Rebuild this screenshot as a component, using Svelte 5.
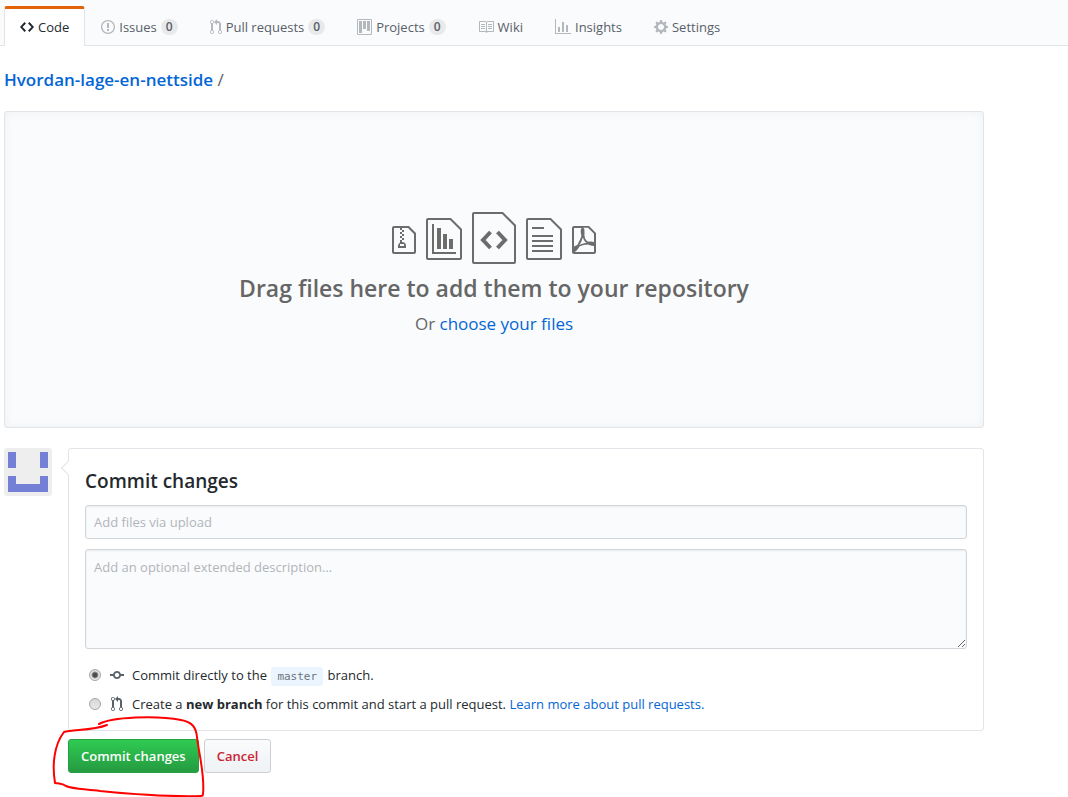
<script>
  const icons = {
    code: { w: 14, d: 'M9.5 3L8 4.5 11.5 8 8 11.5 9.5 13 14 8 9.5 3zm-5 0L0 8l4.5 5L6 11.5 2.5 8 6 4.5 4.5 3z' },
    issue: { w: 14, d: 'M7 2.3c3.14 0 5.7 2.56 5.7 5.7s-2.56 5.7-5.7 5.7A5.71 5.71 0 0 1 1.3 8c0-3.14 2.56-5.7 5.7-5.7zM7 1C3.14 1 0 4.14 0 8s3.14 7 7 7 7-3.14 7-7-3.14-7-7-7zm1 3H6v5h2V4zm0 6H6v2h2v-2z' },
    pull: { w: 12, d: 'M11 11.28V5c-.03-.78-.34-1.47-.94-2.06C9.46 2.35 8.78 2.03 8 2H7V0L4 3l3 3V4h1c.27.02.48.11.69.31.21.2.3.42.31.69v6.28A1.993 1.993 0 0 0 10 15a1.993 1.993 0 0 0 1-3.72zm-1 2.92c-.66 0-1.2-.55-1.2-1.2 0-.65.55-1.2 1.2-1.2.65 0 1.2.55 1.2 1.2 0 .65-.55 1.2-1.2 1.2zM4 3c0-1.11-.89-2-2-2a1.993 1.993 0 0 0-1 3.72v6.56A1.993 1.993 0 0 0 2 15a1.993 1.993 0 0 0 1-3.72V4.72c.59-.34 1-.98 1-1.72zm-.8 10c0 .66-.55 1.2-1.2 1.2-.65 0-1.2-.55-1.2-1.2 0-.65.55-1.2 1.2-1.2.65 0 1.2.55 1.2 1.2zM2 4.2C1.34 4.2.8 3.65.8 3c0-.65.55-1.2 1.2-1.2.65 0 1.2.55 1.2 1.2 0 .65-.55 1.2-1.2 1.2z' },
    project: { w: 15, d: 'M10 12h3V2h-3v10zm-4-2h3V2H6v8zm-4 4h3V2H2v12zm-1 1h13V1H1v14zM14 0H1a1 1 0 0 0-1 1v14a1 1 0 0 0 1 1h13a1 1 0 0 0 1-1V1a1 1 0 0 0-1-1z' },
    book: { w: 16, d: 'M3 5h4v1H3V5zm0 3h4V7H3v1zm0 2h4V9H3v1zm11-5h-4v1h4V5zm0 2h-4v1h4V7zm0 2h-4v1h4V9zm2-6v9c0 .55-.45 1-1 1H9.5l-1 1-1-1H2c-.55 0-1-.45-1-1V3c0-.55.45-1 1-1h5.5l1 1 1-1H15c.55 0 1 .45 1 1zm-8 .5L7.5 3H2v9h6V3.5zm7-.5H9.5l-.5.5V12h6V3z' },
    graph: { w: 16, d: 'M16 14v1H0V0h1v14h15zM5 13H3V8h2v5zm4 0H7V3h2v10zm4 0h-2V6h2v7z' },
    gear: { w: 14, d: 'M14 8.77v-1.6l-1.94-.64-.45-1.09.88-1.84-1.13-1.13-1.81.91-1.09-.45-.69-1.92h-1.6l-.63 1.94-1.11.45-1.84-.88-1.13 1.13.91 1.81-.45 1.09L0 7.23v1.59l1.94.64.45 1.09-.88 1.84 1.13 1.13 1.81-.91 1.09.45.69 1.92h1.59l.63-1.94 1.11-.45 1.84.88 1.13-1.13-.92-1.81.47-1.09L14 8.75v.02zM7 11c-1.66 0-3-1.34-3-3s1.34-3 3-3 3 1.34 3 3-1.34 3-3 3z' },
    commit: { w: 14, d: 'M10.86 7c-.45-1.72-2-3-3.86-3-1.86 0-3.41 1.28-3.86 3H0v2h3.14c.45 1.72 2 3 3.86 3 1.86 0 3.41-1.28 3.86-3H14V7h-3.14zM7 10.2c-1.22 0-2.2-.98-2.2-2.2 0-1.22.98-2.2 2.2-2.2 1.22 0 2.2.98 2.2 2.2 0 1.22-.98 2.2-2.2 2.2z' }
  };

  const tabs = [
    { label: 'Code', icon: 'code', active: true },
    { label: 'Issues', icon: 'issue', count: 0 },
    { label: 'Pull requests', icon: 'pull', count: 0 },
    { label: 'Projects', icon: 'project', count: 0 },
    { label: 'Wiki', icon: 'book' },
    { label: 'Insights', icon: 'graph' },
    { label: 'Settings', icon: 'gear' }
  ];

  let target = $state('direct');
  let summary = $state('');
  let description = $state('');
</script>

{#snippet icon(name)}
  <svg class="icon" width={icons[name].w} height="16" viewBox="0 0 {icons[name].w} 16" aria-hidden="true"><path fill-rule="evenodd" d={icons[name].d} /></svg>
{/snippet}

<nav class="tabs">
  {#each tabs as tab}
    <a href="#{tab.icon}" class="tab" class:active={tab.active}>
      {@render icon(tab.icon)}
      <span>{tab.label}</span>
      {#if tab.count !== undefined}<span class="counter">{tab.count}</span>{/if}
    </a>
  {/each}
</nav>

<main>
  <div class="breadcrumb"><a href="#repo">Hvordan-lage-en-nettside</a> <span>/</span></div>

  <section class="dropzone">
    <div class="files" aria-hidden="true">
      <svg width="24" height="32" viewBox="0 0 12 16"><path fill="currentColor" fill-rule="evenodd" d="M8.5 1H1a1 1 0 0 0-1 1v12a1 1 0 0 0 1 1h10a1 1 0 0 0 1-1V4.5L8.5 1zM11 14H1V2h3v1h1V2h3l3 3v9zM5 4V3h1v1H5zM4 4h1v1H4V4zm1 2V5h1v1H5zM4 6h1v1H4V6zm1 2V7h1v1H5zM4 9.28A2 2 0 0 0 3 11v1h4v-1a2 2 0 0 0-2-2V8H4v1.28zM6 10v1H4v-1h2z" /></svg>
      <svg width="36" height="44" viewBox="0 0 36 44">
        <path class="line" d="M2 1H24.500L35 11.500V40a1 1 0 0 1-1 1H2a1 1 0 0 1-1-1V2a1 1 0 0 1 1-1z" />
        <path class="line" d="M7 6V35H30" />
        <path fill="currentColor" d="M11 10h4v21h-4zM17 16h4v15h-4zM23 21h4v10h-4z" />
      </svg>
      <svg width="44" height="56" viewBox="0 0 44 56">
        <path class="line" d="M2 1H30.500L43 13.500V50a1 1 0 0 1-1 1H2a1 1 0 0 1-1-1V2a1 1 0 0 1 1-1z" />
        <path class="chevrons" d="M18.500 20L11 28l7.500 8M25.500 20L33 28l-7.500 8" />
      </svg>
      <svg width="36" height="44" viewBox="0 0 36 44">
        <path class="line" d="M2 1H24.500L35 11.500V40a1 1 0 0 1-1 1H2a1 1 0 0 1-1-1V2a1 1 0 0 1 1-1z" />
        <path class="line" d="M6 10h12M6 18h21M6 23h21M6 28h21M6 33h21" />
      </svg>
      <svg width="24" height="32" viewBox="0 0 12 16"><path fill="currentColor" fill-rule="evenodd" d="M8.5 1H1a1 1 0 0 0-1 1v12a1 1 0 0 0 1 1h10a1 1 0 0 0 1-1V4.500L8.500 1zM1 2h4a.68.68 0 0 0-.31.2 1.080 1.080 0 0 0-.23.47 4.220 4.220 0 0 0-.09 1.470c.06.609.173 1.211.34 1.800A21.780 21.780 0 0 1 3.600 8.600c-.5 1-.8 1.660-.91 1.840a7.156 7.156 0 0 0-.69.3 4.190 4.190 0 0 0-1 .64V2zm4.420 4.800a5.650 5.650 0 0 0 1.170 2.090c.275.237.595.417.94.53-.64.09-1.230.2-1.810.33-.618.15-1.223.347-1.810.59s.22-.44.61-1.250c.365-.74.67-1.510.91-2.300l-.01.01zM11 14H1.500a.743.743 0 0 1-.17 0 2.120 2.120 0 0 0 .73-.44 10.140 10.140 0 0 0 1.780-2.380c.31-.13.58-.23.81-.31l.42-.14c.45-.13.94-.23 1.440-.33s1-.16 1.480-.2a8.650 8.650 0 0 0 1.390.53c.403.11.814.188 1.230.23h.38V14H11zm0-4.860a3.740 3.740 0 0 0-.64-.28 4.220 4.220 0 0 0-.75-.11c-.411.003-.822.03-1.230.08a3 3 0 0 1-1.840-1.640 6.070 6.070 0 0 1-.32-1.840c.06-.62.06-1.250 0-1.870.04-.66-.09-1.250-.3-1.400a.66.66 0 0 0-.49-.22H8l3 3v4.280z" /></svg>
    </div>
    <h1>Drag files here to add them to your repository</h1>
    <p>Or <a href="#choose">choose your files</a></p>
  </section>

  <form class="commit" onsubmit={(e) => e.preventDefault()}>
    <svg class="avatar" width="48" height="48" viewBox="0 0 48 48" role="img" aria-label="Avatar">
      <rect width="48" height="48" rx="3" fill="#eeeeee" />
      <path fill="#7380d6" d="M4 4h8v16H4zM36 4h8v16h-8zM4 28h8v8h24v-8h8v16H4z" />
    </svg>
    <div class="body">
      <div class="box">
        <h2>Commit changes</h2>
        <input class="field" type="text" aria-label="Commit summary" placeholder="Add files via upload" bind:value={summary} />
        <textarea class="field" aria-label="Extended description" placeholder="Add an optional extended description…" bind:value={description}></textarea>
        <label class="choice">
          <input type="radio" name="target" value="direct" bind:group={target} />
          <span class="choice-icon">{@render icon('commit')}</span>
          <span>Commit directly to the <code>master</code> branch.</span>
        </label>
        <div class="choice">
          <input id="new-branch" type="radio" name="target" value="branch" bind:group={target} />
          <span class="choice-icon">{@render icon('pull')}</span>
          <span><label for="new-branch">Create a <strong>new branch</strong> for this commit and start a pull request.</label> <a href="#learn">Learn more about pull requests.</a></span>
        </div>
      </div>
      <div class="actions">
        <button class="btn primary" type="submit">Commit changes</button>
        <button class="btn danger" type="button">Cancel</button>
        <svg class="scribble" width="160" height="90" viewBox="50 710 160 90" aria-hidden="true">
          <path d="M99 724C112 717 156 715 181 720C192 722 196 727 197 737C199 755 205 775 203 794Q203 796 201 796C165 797 130 794 100 791C84 789 72 789 66 786C62 783 60 784 55 783C52 765 54 745 64 732C72 729 92 731 107 725" />
        </svg>
      </div>
    </div>
  </form>
</main>

<style>
  :global(body) {
    margin: 0;
    background: #fff;
    color: #24292e;
    font: 13px/20px "Open Sans", "Noto Sans", sans-serif;
  }
  a { color: #0366d6; text-decoration: none; }
  .icon { display: block; fill: currentColor; flex: none; }

  .tabs {
    display: flex;
    padding: 6px 4px 0;
    background: #fafbfc;
    border-bottom: 1px solid #e1e4e8;
  }
  .tab {
    display: flex;
    align-items: center;
    gap: 4px;
    height: 36px;
    margin-bottom: -1px;
    padding: 0 15px 1px;
    border: 1px solid transparent;
    border-top-width: 3px;
    border-bottom: 0;
    border-radius: 3px 3px 0 0;
    color: #586069;
    white-space: nowrap;
  }
  .tab .icon { color: #b4b8bc; }
  .tab.active {
    background: #fff;
    border-color: #e36209 #e1e4e8 transparent;
    color: #24292e;
  }
  .tab.active .icon { color: #24292e; }
  .counter {
    padding: 2px 5px;
    border-radius: 20px;
    background: rgba(27, 31, 35, 0.08);
    font-size: 12px;
    font-weight: 600;
    line-height: 12px;
  }

  main { max-width: 980px; padding: 0 4px; }

  .breadcrumb {
    padding: 20px 0 18px;
    color: #586069;
    font-size: 17px;
    line-height: 27px;
  }
  .breadcrumb a { font-weight: 600; }

  .dropzone {
    padding: 100px 20px 89px;
    border: 1px solid #e1e4e8;
    border-radius: 3px;
    background: #fafbfc;
    box-shadow: inset 0 0 10px rgba(27, 31, 35, 0.05);
    color: #666;
    text-align: center;
  }
  .files {
    display: flex;
    align-items: center;
    justify-content: center;
    gap: 10px;
    height: 56px;
    color: #6c6c6c;
  }
  .line { fill: none; stroke: currentColor; stroke-width: 2; }
  .chevrons { fill: none; stroke: currentColor; stroke-width: 4; }
  h1 {
    margin: 3px 0 0;
    font-size: 23px;
    font-weight: 600;
    line-height: 34px;
  }
  .dropzone p { margin: 5px 0 0; font-size: 17px; line-height: 28px; }

  .commit { display: flex; gap: 16px; margin-top: 20px; }
  .avatar { flex: none; }
  .body { flex: 1; min-width: 0; }
  .box {
    position: relative;
    padding: 16px;
    border: 1px solid #e1e4e8;
    border-radius: 3px;
  }
  .box::before {
    content: "";
    position: absolute;
    top: 14px;
    left: -6px;
    width: 9px;
    height: 9px;
    border: solid #e1e4e8;
    border-width: 0 0 1px 1px;
    background: #fff;
    transform: rotate(45deg);
  }
  h2 { margin: 0 0 8px; font-size: 19px; font-weight: 600; line-height: 32px; }
  .field {
    display: block;
    box-sizing: border-box;
    width: 100%;
    margin: 0 0 10px;
    padding: 7px 8px;
    border: 1px solid #d1d5da;
    border-radius: 3px;
    background: #fafbfc;
    box-shadow: inset 0 1px 2px rgba(27, 31, 35, 0.075);
    color: #24292e;
    font: inherit;
  }
  input.field { height: 34px; }
  textarea.field { height: 100px; margin-bottom: 16px; resize: vertical; }
  .field::placeholder { color: #b1b5ba; opacity: 1; }

  .choice { display: flex; align-items: center; padding-left: 4px; }
  .choice + .choice { margin-top: 9px; }
  .choice input {
    appearance: none;
    flex: none;
    width: 12px;
    height: 12px;
    margin: 0;
    border: 1px solid #a4a4a4;
    border-radius: 50%;
    background: linear-gradient(#d8d8d8, #e8e8e8);
  }
  .choice input:checked {
    background: radial-gradient(circle, #4c4c4c 2px, transparent 4px), linear-gradient(#e0e0e0, #f0f0f0);
  }
  .choice-icon {
    display: flex;
    justify-content: center;
    width: 14px;
    margin: 0 8px 0 9px;
    color: #586069;
  }
  code {
    margin: 0 1px;
    padding: 3px 6px;
    border-radius: 3px;
    background: #eaf5ff;
    color: #6a737d;
    font: 11px/14px "DejaVu Sans Mono", "Liberation Mono", monospace;
  }

  .actions { position: relative; display: flex; gap: 5px; margin-top: 8px; padding-bottom: 24px; }
  .btn {
    height: 34px;
    padding: 0 12px;
    border: 1px solid #cdcfd1;
    border-radius: 3px;
    font: 600 13px/20px "Open Sans", "Noto Sans", sans-serif;
    white-space: nowrap;
  }
  .primary {
    border-color: #269f42;
    background: linear-gradient(#2fcb53, #269f42 90%);
    color: #fff;
  }
  .danger { background: linear-gradient(#fafbfc, #eff3f6 90%); color: #cb2431; }
  .scribble {
    position: absolute;
    top: -29px;
    left: -18px;
    overflow: hidden;
    pointer-events: none;
  }
  .scribble path { fill: none; stroke: #f00; stroke-width: 2; stroke-linecap: round; stroke-linejoin: round; }
</style>
